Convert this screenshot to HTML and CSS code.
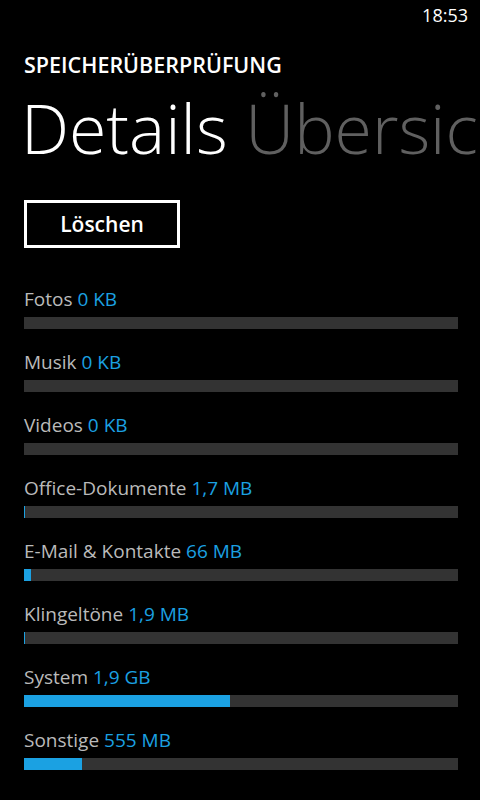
FILE: index.html
```html
<!DOCTYPE html>
<html lang="de">
<head>
<meta charset="utf-8">
<link rel="stylesheet" href="styles.css">
</head>
<body>
<div class="phone">
  <div class="status"><span class="time">18:53</span></div>
  <div class="app-title">SPEICHERÜBERPRÜFUNG</div>
  <div class="pivot"><span class="pivot-active">Details</span> <span class="pivot-next">Übersicht</span></div>
  <div class="content">
    <button class="btn">Löschen</button>
    <ul class="list">
      <li class="row"><div class="label">Fotos <span class="size">0 KB</span></div><div class="bar"><div class="fill" style="width:0px"></div></div></li>
      <li class="row"><div class="label">Musik <span class="size">0 KB</span></div><div class="bar"><div class="fill" style="width:0px"></div></div></li>
      <li class="row"><div class="label">Videos <span class="size">0 KB</span></div><div class="bar"><div class="fill" style="width:0px"></div></div></li>
      <li class="row"><div class="label">Office-Dokumente <span class="size">1,7 MB</span></div><div class="bar"><div class="fill" style="width:1px"></div></div></li>
      <li class="row"><div class="label">E-Mail &amp; Kontakte <span class="size">66 MB</span></div><div class="bar"><div class="fill" style="width:7px"></div></div></li>
      <li class="row"><div class="label">Klingeltöne <span class="size">1,9 MB</span></div><div class="bar"><div class="fill" style="width:1px"></div></div></li>
      <li class="row"><div class="label">System <span class="size">1,9 GB</span></div><div class="bar"><div class="fill" style="width:206px"></div></div></li>
      <li class="row"><div class="label">Sonstige <span class="size">555 MB</span></div><div class="bar"><div class="fill" style="width:58px"></div></div></li>
    </ul>
  </div>
</div>
</body>
</html>
```
FILE: styles.css
```css
html, body {
  margin: 0;
  padding: 0;
  background: #000;
}
.phone {
  width: 480px;
  height: 800px;
  overflow: hidden;
  background: #000;
  color: #fff;
  font-family: "Open Sans", "Noto Sans", sans-serif;
}
.status {
  display: flex;
  justify-content: flex-end;
  height: 30px;
  line-height: 30px;
  padding-right: 12px;
  font-size: 18px;
}
.app-title {
  margin-top: 21px;
  padding-left: 24px;
  font-size: 21.5px;
  line-height: 28px;
  font-weight: 600;
}
.pivot {
  margin-top: 9px;
  padding-left: 21px;
  font-size: 68px;
  line-height: 80px;
  font-weight: 300;
  white-space: nowrap;
  overflow: hidden;
}
.pivot-next {
  color: #606060;
}
.content {
  padding: 0 22px 0 24px;
}
.btn {
  display: block;
  margin: 32px 0 0 0;
  box-sizing: border-box;
  width: 156px;
  height: 48px;
  border: 3px solid #fff;
  background: #000;
  color: #fff;
  font-family: inherit;
  font-size: 21px;
  font-weight: 600;
  padding: 0;
}
.list {
  list-style: none;
  margin: 37px 0 0 0;
  padding: 0;
}
.row {
  margin-bottom: 19px;
}
.label {
  font-size: 19px;
  line-height: 28px;
  color: #bababa;
  white-space: nowrap;
}
.size {
  color: #1ba1e2;
}
.bar {
  margin-top: 4px;
  height: 12px;
  background: #333;
}
.fill {
  height: 100%;
  background: #1ba1e2;
}
```
